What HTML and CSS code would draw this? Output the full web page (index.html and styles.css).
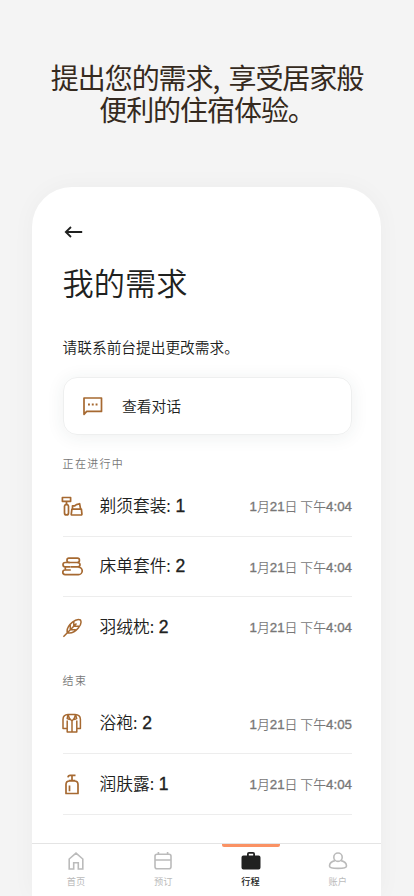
FILE: index.html
```html
<!DOCTYPE html>
<html lang="zh-CN">
<head>
<meta charset="utf-8">
<meta name="viewport" content="width=device-width, initial-scale=1">
<title>我的需求</title>
<link rel="stylesheet" href="styles.css">
</head>
<body>
<h1 class="headline">提出您的需求, 享受居家般<br>便利的住宿体验。</h1>
<main class="phone">
  <div class="content">
    <svg class="back" viewBox="0 0 20 14"><path d="M19.200 7H2.800M8 2 2.800 7 8 12"/></svg>
    <h2 class="title">我的需求</h2>
    <p class="intro">请联系前台提出更改需求。</p>
    <div class="chat">
      <svg class="icon" viewBox="0 0 22 22"><path d="M2 19.300V3h17.500v13.400H4.700z"/><path class="dots" d="M6 9.600h1.900M9.800 9.600h1.900M13.600 9.600h1.900"/></svg>
      <span>查看对话</span>
    </div>
    <h3 class="section">正在进行中</h3>
    <ul class="list">
      <li class="row">
        <svg class="icon" viewBox="0 0 22 22"><path d="M1.400 2.500h8.200v3.800H1.400zM5.500 6.300v3.500M4.300 9.700h2.400l.8 1.500v6.700q0 2-2 2t-2-2v-6.700zM10.500 20H20q1 0 .9-1.200l-.5-4.600h-9.500l-.6 4.600q-.1 1.200.2 1.200zM11.500 14.200v-3.400h2.300l1.600-1.200 3.200-.9 1 5.500"/></svg>
        <span class="name">剃须套装: <b>1</b></span><time class="time"><b>1</b>月<b>21</b>日 下午<b>4:04</b></time>
      </li>
      <li class="row">
        <svg class="icon" viewBox="0 0 22 22"><rect x="6" y="3.200" width="12.400" height="4.300" rx="1.900"/><path d="M9 7.500H4.200a2.200 2.200 0 0 0 0 4.400h5.500M16.500 7.500q2.500.2 2.500 2.200t-2.500 2.200H10M9.800 15H4.100a2.300 2.300 0 0 0 0 4.600h13.400a3.700 3.700 0 0 0 0-7.400M4.300 12.300v2.400"/></svg>
        <span class="name">床单套件: <b>2</b></span><time class="time"><b>1</b>月<b>21</b>日 下午<b>4:04</b></time>
      </li>
      <li class="row">
        <svg class="icon thin" viewBox="0 0 22 22"><path d="M2.400 20.800 15.500 7.500M6.300 16.800c-1-4.600 1.700-7.700 5.200-10.600 2.500-2.100 6-3.200 8-2.200 1 2 0 5.500-2.200 8-2.900 3.500-6.200 5.800-11 4.800M9.300 13.800V8.900M12.800 10.200V5.400M9.300 13.800h5.500M12.800 10.200H18"/></svg>
        <span class="name">羽绒枕: <b>2</b></span><time class="time"><b>1</b>月<b>21</b>日 下午<b>4:04</b></time>
      </li>
    </ul>
    <h3 class="section ended">结束</h3>
    <ul class="list list-ended">
      <li class="row">
        <svg class="icon thin" viewBox="0 0 22 22"><path d="M6.200 16.400H2V7.200Q2.200 2.800 7 2.600h7q5.200.2 5.400 4.600v9.200h-3.800M6.200 8.500V20h9.600V8.500M7 2.600q1 4.200 4 6.400V20M14.600 2.600Q13.600 7 11 9M7 2.600l-.8 4 2.600 1M14.600 2.600l1.100 4-2.600 1"/></svg>
        <span class="name">浴袍: <b>2</b></span><time class="time"><b>1</b>月<b>21</b>日 下午<b>4:05</b></time>
      </li>
      <li class="row last">
        <svg class="icon" viewBox="0 0 22 22"><path d="M5 20.500v-9q0-3.500 3.500-3.500h5q3.500 0 3.500 3.500v9zM8.500 12.500v5.800M11 7.800V3M7.700 7.500h6.600M14.500 2.300H9.200q-2 0-2.200 2"/></svg>
        <span class="name">润肤露: <b>1</b></span><time class="time"><b>1</b>月<b>21</b>日 下午<b>4:04</b></time>
      </li>
    </ul>
  </div>
  <nav class="tabs">
    <div class="tab"><svg viewBox="0 0 20 20"><path d="M3.200 8 10 2.100 16.800 8v10h-4.500v-6.200H7.700V18H3.200z"/></svg>首页</div>
    <div class="tab"><svg viewBox="0 0 20 20"><rect x="2" y="3.200" width="16" height="14.600" rx="2"/><path d="M2 9h16M5.400 1v2M14.600 1v2"/></svg>预订</div>
    <div class="tab active"><svg viewBox="0 0 20 20"><path class="solid" d="M2.400 4.600H6V3q0-2 2-2h4q2 0 2 2v1.600h3.600q1.900 0 1.900 1.900v10q0 1.900-1.900 1.900H2.400Q.5 18.400.5 16.500v-10q0-1.900 1.900-1.900zM7.800 4.600h4.400V2.800H7.800z"/></svg>行程</div>
    <div class="tab"><svg viewBox="0 0 20 20"><circle cx="10" cy="6.200" r="4.200"/><path d="M6.900 9.600C3.300 10.500 1.500 12.500 1.500 14.900q0 2.500 8.500 2.500t8.500-2.500c0-2.400-1.800-4.400-5.400-5.300"/></svg>账户</div>
  </nav>
</main>
</body>
</html>
```
FILE: styles.css
```css
* { box-sizing: border-box; }
body {
  margin: 0;
  height: 896px;
  overflow: hidden;
  display: flex;
  flex-direction: column;
  background: #f4f4f4;
  color: #202120;
  font-family: "Noto Sans CJK SC", sans-serif;
  font-weight: 350;
}
h1, h2, h3, p, ul { margin: 0; padding: 0; font-weight: 350; }
.headline {
  height: 187px;
  padding-top: 61px;
  text-align: center;
  font-size: 28px;
  font-weight: 400;
  line-height: 32px;
  letter-spacing: -1.050px;
  word-spacing: 4px;
  color: #352a20;
  white-space: nowrap;
}
.phone {
  width: 349px;
  height: 709px;
  margin-left: 32.400px;
  display: flex;
  flex-direction: column;
  background: #fff;
  border-radius: 40px 40px 0 0;
  box-shadow: 0 0 24px rgba(0, 0, 0, .035);
}
.content { height: 656px; padding: 38px 29.400px 0 30.200px; }
.back { display: block; width: 20px; height: 14px; fill: none; stroke: #202120; stroke-width: 1.800; }
.title { margin-top: 22px; font-size: 31.200px; line-height: 42px; }
.intro { margin-top: 33px; font-size: 14.700px; line-height: 22px; white-space: nowrap; }
.chat {
  height: 58px;
  margin-top: 19px;
  padding: 0 0 1px 18px;
  display: flex;
  align-items: center;
  gap: 18.300px;
  font-size: 14.800px;
  border: 1px solid #eeefef;
  border-radius: 14px;
  box-shadow: 0 2px 18px rgba(40, 65, 70, .08);
}
.icon { width: 22px; height: 22px; flex: none; fill: none; stroke: #a66931; stroke-width: 1.700; stroke-linejoin: round; }
.thin { stroke-width: 1.500; }
.dots { stroke-width: 2; }
.section { margin-top: 19px; font-size: 11px; line-height: 18px; letter-spacing: 1.300px; color: #777; }
.list { list-style: none; padding-top: 4px; }
.list-ended { padding-top: 5px; }
.row { height: 60.500px; display: flex; align-items: center; border-bottom: 1px solid #ededed; }
.row:last-child { border-bottom-color: transparent; }
.row.last { border-bottom-color: #ededed; }
.row .icon { margin-left: -2px; }
.name { margin-left: 17px; padding-bottom: 2px; font-size: 16.700px; white-space: nowrap; }
.name b, .time b { font-family: "Liberation Sans", sans-serif; font-weight: 400; -webkit-text-stroke: .35px currentColor; }
.name b { font-size: 17.500px; margin-left: 1px; }
.time { margin-left: auto; font-size: 12.900px; color: #777; white-space: nowrap; }
.time b { font-size: 13.300px; }
.ended { margin-top: 13px; }
.tabs { height: 53px; display: grid; grid-template-columns: repeat(4, 1fr); border-top: 1px solid #e4e4e4; }
.tab { display: flex; flex-direction: column; align-items: center; padding-top: 5px; font-size: 9.200px; line-height: 15px; color: #bbb; font-weight: 400; border-top: 2px solid transparent; }
.tab svg { width: 20px; height: 20px; margin-bottom: 3px; fill: none; stroke: #bbb; stroke-width: 1.600; }
.active { color: #202120; position: relative; font-weight: 500; }
.active::before { content: ""; position: absolute; top: -2px; width: 58px; height: 2.500px; background: #fa9264; border-radius: 0 0 2px 2px; }
.tab .solid { fill: #202120; stroke: none; fill-rule: evenodd; }
```
